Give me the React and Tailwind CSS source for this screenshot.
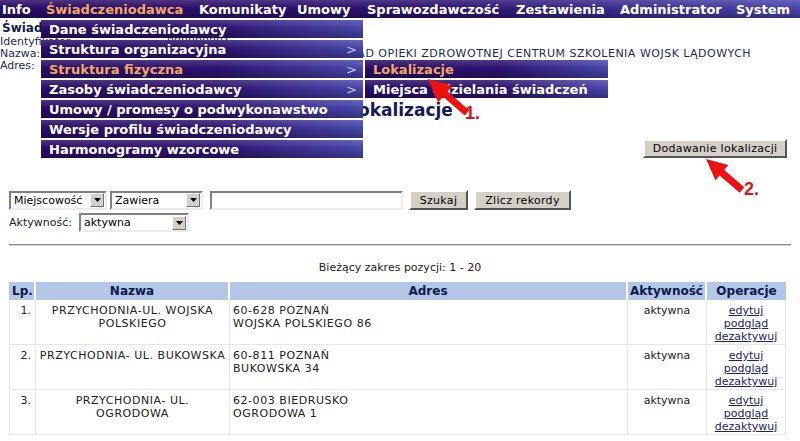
import React from 'react';

const navItems = [
  { label: 'Info', w: 'w-[44px]' },
  { label: 'Świadczeniodawca', w: 'w-[153px]', active: true },
  { label: 'Komunikaty', w: 'w-[98px]' },
  { label: 'Umowy', w: 'w-[70px]' },
  { label: 'Sprawozdawczość', w: 'w-[149px]' },
  { label: 'Zestawienia', w: 'w-[104px]' },
  { label: 'Administrator', w: 'w-[116px]' },
  { label: 'System', w: 'w-[60px]' },
];

const menuItems = [
  { label: 'Dane świadczeniodawcy' },
  { label: 'Struktura organizacyjna', more: true },
  { label: 'Struktura fizyczna', more: true, active: true },
  { label: 'Zasoby świadczeniodawcy', more: true },
  { label: 'Umowy / promesy o podwykonawstwo' },
  { label: 'Wersje profilu świadczeniodawcy' },
  { label: 'Harmonogramy wzorcowe' },
];

const subItems = [
  { label: 'Lokalizacje', active: true },
  { label: 'Miejsca udzielania świadczeń' },
];

const rows = [
  { lp: '1.', name: ['PRZYCHODNIA-UL. WOJSKA', 'POLSKIEGO'], addr: ['60-628 POZNAŃ', 'WOJSKA POLSKIEGO 86'] },
  { lp: '2.', name: ['PRZYCHODNIA- UL. BUKOWSKA'], addr: ['60-811 POZNAŃ', 'BUKOWSKA 34'] },
  { lp: '3.', name: ['PRZYCHODNIA- UL.', 'OGRODOWA'], addr: ['62-003 BIEDRUSKO', 'OGRODOWA 1'] },
];

// purple bar look used by the top menu and the dropdowns
const barBg =
  'bg-[linear-gradient(180deg,rgba(255,255,255,0.16)_0%,rgba(255,255,255,0)_45%,rgba(0,0,0,0.28)_100%),linear-gradient(90deg,#2a0d66_0%,#2d1370_55%,#4846ac_100%)]';

const MenuRow = ({ label, more, active, w }) => (
  <div className={`${w} h-[18px] ${barBg} flex items-center justify-between pl-[8px] pr-[6px]`}>
    <span className={`text-[13px] font-bold leading-none ${active ? 'text-[#f2a864]' : 'text-white'}`}>{label}</span>
    {more && <span className="text-[13px] text-[#c8c8e0] leading-none">&gt;</span>}
  </div>
);

const Select = ({ label, w }) => (
  <div className={`${w} h-[19px] flex items-center justify-between bg-white border-2 border-t-[#808080] border-l-[#808080] border-r-[#ececec] border-b-[#ececec] pl-[3px] pr-[1px]`}>
    <span className="text-[11px] text-black leading-none">{label}</span>
    <div className="w-[14px] h-[14px] bg-[#d4d0c8] border border-t-white border-l-white border-r-[#707070] border-b-[#707070] flex items-center justify-center">
      <svg width="7" height="4" viewBox="0 0 7 4"><path d="M0 0h7L3.5 4z" fill="#000" /></svg>
    </div>
  </div>
);

const Button = ({ children, w, h = 'h-[20px]' }) => (
  <div className={`${w} ${h} bg-[#d4d0c8] border-2 border-t-white border-l-white border-r-[#555] border-b-[#555] flex items-center justify-center text-[11px] tracking-[0.3px] text-black leading-none`}>
    {children}
  </div>
);

function arrowPoints(tx, ty, sx, sy, h, w, s) {
  const dx = sx - tx, dy = sy - ty;
  const len = Math.hypot(dx, dy);
  const ux = dx / len, uy = dy / len;
  const nx = -uy, ny = ux;
  const bx = tx + ux * h, by = ty + uy * h;
  return [
    [tx, ty],
    [bx + nx * w, by + ny * w],
    [bx + nx * s, by + ny * s],
    [sx + nx * s, sy + ny * s],
    [sx - nx * s, sy - ny * s],
    [bx - nx * s, by - ny * s],
    [bx - nx * w, by - ny * w],
  ].map((p) => p.map((v) => v.toFixed(1)).join(',')).join(' ');
}

export default function App() {
  return (
    <div className="relative w-[800px] h-[441px] overflow-hidden bg-white font-['DejaVu_Sans',Verdana,sans-serif] text-[#222]">
      {/* top menu */}
      <nav className={`h-[18px] flex items-center pl-[2px] ${barBg}`}>
        {navItems.map((n) => (
          <div key={n.label} className={`${n.w} shrink-0`}>
            <span className={`text-[13px] font-bold leading-none ${n.active ? 'text-[#f2a864]' : 'text-white'}`}>{n.label}</span>
          </div>
        ))}
      </nav>

      {/* provider header */}
      <div className="pl-[2px] pt-[2px]">
        <div className="text-[12px] font-bold leading-[16px] text-[#0e1c4e]">Świadczeniodawca</div>
        <div className="grid grid-cols-[167px_1fr] text-[11px] leading-[12px] text-[#1c2a58] -ml-[2px]">
          <span>Identyfikator:</span><span>000000001</span>
          <span>Nazwa:</span><span className="tracking-[0.5px]">SAMODZIELNY PUBLICZNY ZAKŁAD OPIEKI ZDROWOTNEJ CENTRUM SZKOLENIA WOJSK LĄDOWYCH</span>
          <span>Adres:</span><span>ul. Obornicka 296, 61-693 Poznań</span>
        </div>
      </div>

      <h1 className="mt-[28px] text-center text-[17px] font-bold leading-[20px] text-[#141a5c]">Lokalizacje</h1>

      <div className="mt-[19px] flex justify-end pr-[13px]">
        <Button w="w-[144px]" h="h-[19px]">Dodawanie lokalizacji</Button>
      </div>

      {/* filters */}
      <div className="mt-[32px] ml-[9px] flex items-center h-[20px]">
        <Select label="Miejscowość" w="w-[98px]" />
        <div className="ml-[3px]"><Select label="Zawiera" w="w-[93px]" /></div>
        <div className="ml-[7px] w-[193px] h-[19px] bg-white border-2 border-t-[#808080] border-l-[#808080] border-r-[#ececec] border-b-[#ececec]" />
        <div className="ml-[6px]"><Button w="w-[59px]">Szukaj</Button></div>
        <div className="ml-[6px]"><Button w="w-[97px]">Zlicz rekordy</Button></div>
      </div>
      <div className="mt-[3px] ml-[9px] flex items-center h-[19px]">
        <span className="text-[11px] leading-none w-[70px]">Aktywność:</span>
        <Select label="aktywna" w="w-[110px]" />
      </div>

      <div className="mt-[12px] mx-[9px] border-t border-b border-t-[#8c8c8c] border-b-[#d6d6d6]" />

      <div className="mt-[15px] text-center text-[11px] leading-[13px]">Bieżący zakres pozycji: 1 - 20</div>

      {/* results */}
      <table className="mt-[8px] ml-[9px] w-[777px] table-fixed border-separate border-spacing-0 text-[11px]">
        <colgroup>
          <col className="w-[27px]" />
          <col className="w-[194px]" />
          <col className="w-[398px]" />
          <col className="w-[79px]" />
          <col className="w-[79px]" />
        </colgroup>
        <thead>
          <tr className="h-[18px] bg-[#b4c7e8] text-[12px] font-bold text-[#0c1a4a] leading-none">
            <th className="text-left pl-[3px] border-r-2 border-white">Lp.</th>
            <th className="text-center border-r-2 border-white">Nazwa</th>
            <th className="text-center border-r-2 border-white">Adres</th>
            <th className="text-center border-r-2 border-white">Aktywność</th>
            <th className="text-center">Operacje</th>
          </tr>
        </thead>
        <tbody>
          {rows.map((r) => (
            <tr key={r.lp} className="align-top leading-[13px]">
              <td className="text-right pr-[4px] pt-[4px] border-l border-r border-b border-[#e6e6e6]">{r.lp}</td>
              <td className="text-center pt-[4px] border-r border-b border-[#e6e6e6] whitespace-nowrap tracking-[0.55px]">
                {r.name.map((l) => <div key={l}>{l}</div>)}
              </td>
              <td className="pl-[3px] pt-[4px] border-r border-b border-[#e6e6e6] tracking-[0.55px]">
                {r.addr.map((l) => <div key={l}>{l}</div>)}
              </td>
              <td className="text-center pt-[4px] border-r border-b border-[#e6e6e6]">aktywna</td>
              <td className="pt-[4px] pb-[1px] border-r border-b border-[#e6e6e6]">
                <div className="flex flex-col items-center text-[#1a2466]">
                  <a className="underline">edytuj</a>
                  <a className="underline">podgląd</a>
                  <a className="underline">dezaktywuj</a>
                </div>
              </td>
            </tr>
          ))}
        </tbody>
      </table>

      {/* open dropdown menu */}
      <div className="absolute left-[41px] top-[20px] flex flex-col gap-[2px]">
        {menuItems.map((m) => <MenuRow key={m.label} {...m} w="w-[322px]" />)}
      </div>
      <div className="absolute left-[365px] top-[60px] flex flex-col gap-[2px]">
        {subItems.map((m) => <MenuRow key={m.label} {...m} w="w-[243px]" />)}
      </div>

      {/* red annotation arrows */}
      <svg className="absolute inset-0 pointer-events-none" width="800" height="441">
        <polygon points={arrowPoints(428, 79, 467, 113, 23, 11, 3.5)} fill="#ee1111" />
        <polygon points={arrowPoints(706, 159, 742, 190, 21, 10, 3.5)} fill="#ee1111" />
      </svg>
      <span className="absolute left-[465px] top-[104px] text-[18px] font-bold leading-none text-[#e01414] font-['Liberation_Sans',Arial,sans-serif]">1.</span>
      <span className="absolute left-[744px] top-[180px] text-[18px] font-bold leading-none text-[#e01414] font-['Liberation_Sans',Arial,sans-serif]">2.</span>
    </div>
  );
}
